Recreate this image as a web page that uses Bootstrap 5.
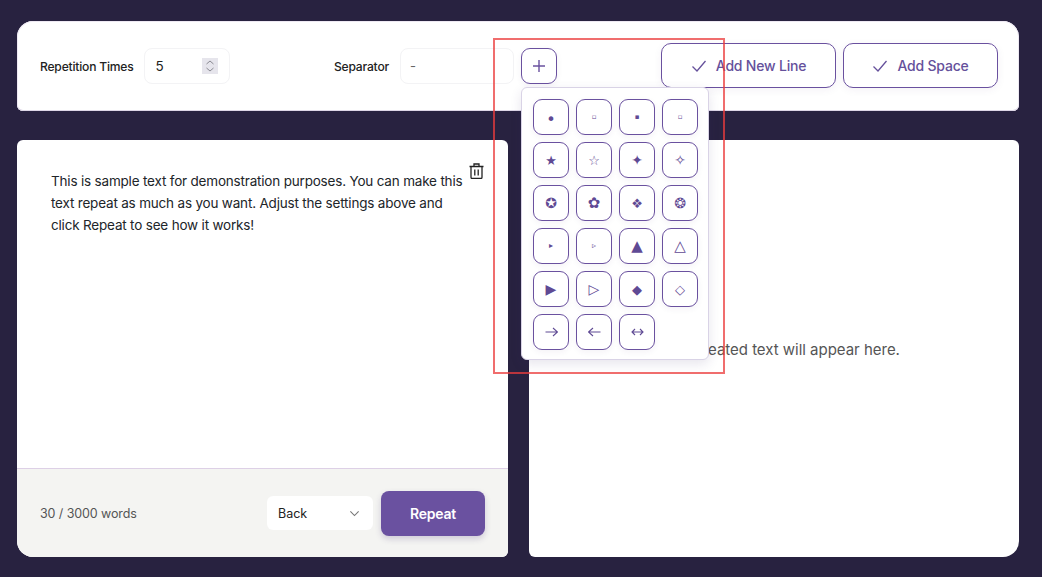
<!DOCTYPE html>
<html lang="en">
<head>
  <meta charset="UTF-8" />
  <meta name="viewport" content="width=device-width, initial-scale=1.0">
  <title>Text Repeater</title>
  <link href="https://cdn.jsdelivr.net/npm/bootstrap@5.3.3/dist/css/bootstrap.min.css" rel="stylesheet">
  <style>
    body { background: #282240; font-family: "Inter", "Liberation Sans", sans-serif; color: #222; height: 577px; overflow: hidden; padding: 21px 23px 20px 17px; position: relative; }
    .top-panel { height: 90px; background: #fff; border-radius: 16px 16px 6px 6px; box-shadow: inset 0 -1px 0 #ddd6e6, inset 0 0 0 1px #eee9f3; padding: 0 21px 0 23px; margin-bottom: 29px; }
    .field-label { font-size: 12.1px; font-weight: 500; letter-spacing: -.2px; color: #222; white-space: nowrap; padding-top: 2px; }
    .rep-label { margin-right: 10px; }
    .sep-label { margin-right: 11px; }
    .rep-box { width: 86px; height: 36px; border: 1px solid #f3f3f5; border-radius: 8px; padding: 0 11px; font-size: 13.5px; }
    .spin-box { width: 16px; height: 16px; background: #e6e5ec; display: block; line-height: 0; }
    .sep-input { width: 114px; height: 36px; border: 1px solid #f3f3f5; border-radius: 8px; font-size: 13px; color: #666; padding: 0 9px; box-shadow: none; }
    .plus-wrap { position: relative; margin-left: 7px; }
    .sym-btn { width: 36px; height: 36px; padding: 0; background: #fff; border: 1px solid #6a519f; border-radius: 9px; color: #5f4a94; font-family: "DejaVu Sans", sans-serif; font-size: 14px; line-height: 1; display: flex; align-items: center; justify-content: center; box-shadow: 0 2px 6px rgba(60, 40, 110, .06); }
    .sym-menu { position: absolute; top: 39px; left: 0; width: 188px; height: 273px; background: #fff; border: 1px solid #d9d3e6; border-radius: 6px; box-shadow: 0 4px 12px rgba(60, 40, 110, .12); padding: 11px; display: grid; grid-template-columns: repeat(4, 36px); grid-auto-rows: 36px; gap: 7px; z-index: 5; }
    .sym-menu .sym-btn:first-child { padding-top: 5px; }
    .add-btn { height: 45px; border: 1px solid #6a519f; border-radius: 10px; background: #fff; color: #65509b; font-size: 14px; font-weight: 500; letter-spacing: -.2px; gap: 9px; margin-bottom: 1px; box-shadow: 0 2px 8px rgba(60, 40, 110, .06); }
    .add-line { width: 175px; margin-left: 104px; margin-right: 7px; }
    .add-space { width: 155px; }
    .main-row { display: grid; grid-template-columns: 491px 490px; gap: 21px; height: 417px; }
    .text-panel { background: #fff; border-radius: 6px 6px 6px 16px; overflow: hidden; }
    .result-panel { background: #fff; border-radius: 6px 6px 16px 6px; color: #555; font-size: 15px; letter-spacing: -.02px; padding-top: 4px; }
    .text-body { padding: 30px 34px; font-size: 13.5px; line-height: 22px; color: #222; position: relative; letter-spacing: -.19px; }
    .trash-icon { position: absolute; top: 23px; right: 24px; }
    .text-foot { height: 89px; background: #f4f4f2; border-top: 1px solid #ddd0e6; padding: 0 23px; }
    .word-count { font-size: 12.5px; color: #555; letter-spacing: -.1px; padding-top: 2px; }
    .back-select { --bs-form-select-bg-img: url("data:image/svg+xml,%3csvg xmlns='http://www.w3.org/2000/svg' viewBox='0 0 16 16'%3e%3cpath fill='none' stroke='%23777' stroke-width='1.6' d='M2 5l6 6 6-6'/%3e%3c/svg%3e"); background-size: 11px 11px; background-position: right 13px center; width: 106px; height: 34px; border: 0; border-radius: 6px; font-size: 12.5px; padding: 2px 12px 0 11px; box-shadow: none; color: #222; margin-right: 8px; }
    .repeat-btn { width: 104px; height: 45px; border: 0; border-radius: 8px; background: #6a51a0; color: #fff; font-size: 14px; font-weight: 600; letter-spacing: -.2px; box-shadow: 0 3px 6px rgba(60, 40, 110, .2); }
    .red-frame { position: absolute; left: 493px; top: 38px; width: 232px; height: 336px; border: 2px solid rgba(235, 60, 60, .75); z-index: 10; pointer-events: none; }
  </style>
</head>
<body>
  <div class="top-panel d-flex align-items-center">
    <span class="field-label rep-label">Repetition Times</span>
    <div class="rep-box d-flex align-items-center justify-content-between">
      <span>5</span>
      <span class="spin-box">
        <svg width="16" height="16" viewBox="0 0 16 16" fill="none" stroke="#8a8a92" stroke-width="1"><path d="M4.500 6l3.500-3 3.500 3M4.500 10l3.500 3 3.500-3"/></svg>
      </span>
    </div>
    <span class="field-label ms-auto sep-label">Separator</span>
    <input class="form-control sep-input" type="text" value="-">
    <div class="plus-wrap">
      <button class="sym-btn" type="button">
        <svg width="16" height="16" viewBox="0 0 16 16" fill="none" stroke="#6a519f" stroke-width="1.4"><path d="M8 2v12M2 8h12"/></svg>
      </button>
      <div class="sym-menu" id="symMenu"></div>
    </div>
    <button class="btn add-btn add-line d-flex align-items-center justify-content-center" type="button">
      <svg width="16" height="12" viewBox="0 0 16 12" fill="none" stroke="#65509b" stroke-width="1.3"><path d="M1.500 6.500l4.500 4.500 8.500-10"/></svg>
      Add New Line
    </button>
    <button class="btn add-btn add-space d-flex align-items-center justify-content-center" type="button">
      <svg width="16" height="12" viewBox="0 0 16 12" fill="none" stroke="#65509b" stroke-width="1.3"><path d="M1.500 6.500l4.500 4.500 8.500-10"/></svg>
      Add Space
    </button>
  </div>

  <div class="main-row">
    <div class="text-panel d-flex flex-column">
      <div class="text-body flex-grow-1">
        This is sample text for demonstration purposes. You can make this text repeat as much as you want. Adjust the settings above and click Repeat to see how it works!
        <svg class="trash-icon" width="15" height="16" viewBox="0 0 15 16" fill="none" stroke="#222" stroke-width="1.3"><path d="M.5 3.500h14M5 3.500V1h5v2.500M2 3.500v10.700A1.300 1.300 0 0 0 3.300 15.500h8.400A1.300 1.300 0 0 0 13 14.200V3.500M5.800 6.500v6M9.200 6.500v6"/></svg>
      </div>
      <div class="text-foot d-flex align-items-center justify-content-between">
        <span class="word-count">30 / 3000 words</span>
        <div class="d-flex align-items-center">
          <select class="form-select back-select">
            <option>Back</option>
            <option>Front</option>
          </select>
          <button class="btn repeat-btn" type="button">Repeat</button>
        </div>
      </div>
    </div>
    <div class="result-panel d-flex align-items-center justify-content-center">Your repeated text will appear here.</div>
  </div>

  <div class="red-frame"></div>

  <script>
    // glyph and its font size, the picture's symbols differ a lot in size
    const symbols = [
      ["•", 16], ["▫", 7], ["▪", 7], ["▫", 7],
      ["★", 13], ["☆", 13], ["✦", 14], ["✧", 14],
      ["✪", 14], ["✿", 15], ["❖", 13], ["❂", 14],
      ["▸", 8], ["▹", 8], ["▲", 15], ["△", 15],
      ["▶", 14], ["▷", 14], ["◆", 13], ["◇", 13]
    ];
    // DejaVu's arrows are too short, these are drawn
    const arrows = ["M.5 5h12M8 1l4.500 4-4.500 4", "M12.500 5H.5M5 1 .5 5 5 9", "M1 5h11M4 2 1 5l3 3M9 2l3 3-3 3"];
    const menu = document.getElementById("symMenu");
    symbols.forEach(([s, size]) => {
      const b = document.createElement("button");
      b.type = "button";
      b.className = "sym-btn";
      b.style.fontSize = size + "px";
      b.textContent = s;
      menu.appendChild(b);
    });
    arrows.forEach((d) => {
      const b = document.createElement("button");
      b.type = "button";
      b.className = "sym-btn";
      b.innerHTML = `<svg width="13" height="10" viewBox="0 0 13 10" fill="none" stroke="#5f4a94" stroke-width="1.100"><path d="${d}"/></svg>`;
      menu.appendChild(b);
    });
  </script>
  <script src="https://cdn.jsdelivr.net/npm/bootstrap@5.3.3/dist/js/bootstrap.bundle.min.js"></script>
</body>
</html>
